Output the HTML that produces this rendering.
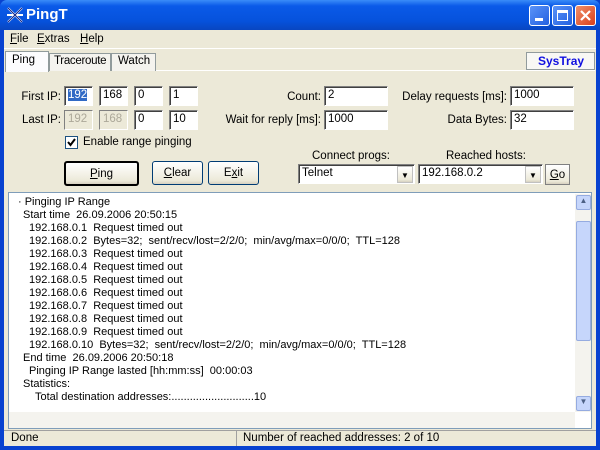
<!DOCTYPE html><html><head><style>
*{margin:0;padding:0;box-sizing:border-box}
body{width:600px;height:450px;overflow:hidden;font:11px "Liberation Sans",sans-serif;color:#000;background:#0842d0;position:relative}
.a{position:absolute}
.win{left:4px;top:30px;width:592px;height:416px;background:#ece9d8}
.tb{left:0;top:0;width:600px;height:30px;background:linear-gradient(#3a8cf8,#0a5ae8 20%,#0652dc 70%,#0846c0);border-radius:7px 7px 0 0}
.tt{left:26px;top:6px;color:#fff;font-weight:bold;font-size:15px}
.wb{top:5px;width:21px;height:21px;border:1px solid #fff;border-radius:3px;background:linear-gradient(135deg,#5a93f8,#2360e0)}
.ed{background:#fff;border:1px solid;border-color:#808080 #fff #fff #808080;box-shadow:inset 1px 1px 0 #404040;padding:2px 0 0 3px;height:20px;font-size:11.5px}
.btn{border:1px solid #003c74;border-radius:3px;background:linear-gradient(#fff,#ece9d8 85%,#d6d0c0);text-align:center;font-size:11.5px;line-height:22px}
.lbl{font-size:11.5px;white-space:nowrap}
.r{text-align:right}
.log{left:8px;top:192px;width:584px;height:237px;background:#fff;border:1px solid #7f9db9}
.ln{position:absolute;left:16px;font-size:11px;white-space:pre}
</style></head><body>
<div class="a tb"></div>
<svg class="a" style="left:6px;top:6px" width="18" height="18"><path d="M2 2L16 16M16 2L2 16M1 9h16" stroke="#fff" stroke-width="2"/><path d="M2 2L16 16M16 2L2 16" stroke="#102080" stroke-width="1"/></svg>
<div class="a tt">PingT</div>
<div class="a wb" style="left:529px"><div class="a" style="left:5px;top:12px;width:8px;height:3px;background:#fff"></div></div>
<div class="a wb" style="left:552px"><div class="a" style="left:4px;top:4px;width:11px;height:11px;border:1px solid #fff;border-top-width:3px"></div></div>
<div class="a wb" style="left:575px;background:linear-gradient(135deg,#f0906a,#d8401c)"><svg width="19" height="19"><path d="M5 5L14 14M14 5L5 14" stroke="#fff" stroke-width="2.2"/></svg></div>
<div class="a win"></div>
<div class="a lbl" style="left:10px;top:33px"><u>F</u>ile</div>
<div class="a lbl" style="left:37px;top:33px"><u>E</u>xtras</div>
<div class="a lbl" style="left:80px;top:33px"><u>H</u>elp</div>
<div class="a" style="left:4px;top:48px;width:592px;height:1px;background:#fff"></div>
<div class="a" style="left:5px;top:70px;width:590px;height:1px;background:#fff"></div>
<div class="a" style="left:5px;top:51px;width:44px;height:21px;border:1px solid #919b9c;border-bottom:none;background:#fcfcfe"></div>
<div class="a lbl" style="left:12px;top:54px">Ping</div>
<div class="a" style="left:49px;top:53px;width:62px;height:18px;border:1px solid #919b9c;border-bottom:none;background:#f4f3ee"></div>
<div class="a lbl" style="left:54px;top:55px;letter-spacing:-0.3px">Traceroute</div>
<div class="a" style="left:111px;top:53px;width:45px;height:18px;border:1px solid #919b9c;border-bottom:none;background:#f4f3ee"></div>
<div class="a lbl" style="left:118px;top:55px">Watch</div>
<div class="a" style="left:526px;top:52px;width:69px;height:18px;border:1px solid #919b9c;background:#f8f8f4"></div>
<div class="a" style="left:538px;top:54px;color:#1010e0;font-weight:bold;font-size:12px">SysTray</div>
<div class="a lbl r" style="left:0;width:61px;top:91px">First IP:</div>
<div class="a lbl r" style="left:0;width:61px;top:114px">Last IP:</div>
<div class="a ed" style="left:64px;top:86px;width:29px"><span style="background:#316ac5;color:#fff">192</span></div>
<div class="a ed" style="left:99px;top:86px;width:29px">168</div>
<div class="a ed" style="left:134px;top:86px;width:29px">0</div>
<div class="a ed" style="left:169px;top:86px;width:29px">1</div>
<div class="a ed" style="left:64px;top:110px;width:29px;background:#ece9d8;color:#aca899;box-shadow:none">192</div>
<div class="a ed" style="left:99px;top:110px;width:29px;background:#ece9d8;color:#aca899;box-shadow:none">168</div>
<div class="a ed" style="left:134px;top:110px;width:29px">0</div>
<div class="a ed" style="left:169px;top:110px;width:29px">10</div>
<div class="a" style="left:65px;top:136px;width:13px;height:13px;border:1px solid #1c5180;background:#fff"><svg width="11" height="11"><path d="M2 5L4.5 8L9 2" stroke="#000" stroke-width="2" fill="none"/></svg></div>
<div class="a lbl" style="left:83px;top:136px">Enable range pinging</div>
<div class="a btn" style="left:64px;top:161px;width:75px;height:25px;border:2px solid #000"><u>P</u>ing</div>
<div class="a btn" style="left:152px;top:161px;width:51px;height:24px"><u>C</u>lear</div>
<div class="a btn" style="left:208px;top:161px;width:51px;height:24px">E<u>x</u>it</div>
<div class="a lbl r" style="left:200px;width:121px;top:91px">Count:</div>
<div class="a lbl r" style="left:200px;width:121px;top:114px">Wait for reply [ms]:</div>
<div class="a ed" style="left:324px;top:86px;width:64px">2</div>
<div class="a ed" style="left:324px;top:110px;width:64px">1000</div>
<div class="a lbl r" style="left:390px;width:117px;top:91px">Delay requests [ms]:</div>
<div class="a lbl r" style="left:390px;width:117px;top:114px">Data Bytes:</div>
<div class="a ed" style="left:510px;top:86px;width:64px">1000</div>
<div class="a ed" style="left:510px;top:110px;width:64px">32</div>
<div class="a lbl" style="left:312px;top:150px">Connect progs:</div>
<div class="a lbl" style="left:446px;top:150px">Reached hosts:</div>
<div class="a ed" style="left:298px;top:164px;width:117px">Telnet</div>
<div class="a btn" style="left:397px;top:166px;width:16px;height:17px;line-height:17px;font-size:8px;border-radius:0;border-color:#c0c0c0">▼</div>
<div class="a ed" style="left:418px;top:164px;width:125px">192.168.0.2</div>
<div class="a btn" style="left:525px;top:166px;width:16px;height:17px;line-height:17px;font-size:8px;border-radius:0;border-color:#c0c0c0">▼</div>
<div class="a btn" style="left:545px;top:164px;width:25px;height:21px;line-height:20px;border-radius:0;border-color:#808080"><u>G</u>o</div>
<div class="a log"></div>
<div class="a" style="left:575px;top:194px;width:16px;height:218px;background:#f4f3ee"></div>
<div class="a" style="left:576px;top:195px;width:15px;height:15px;background:#c6d6fb;border:1px solid #95abe0;border-radius:2px;font-size:8px;text-align:center;color:#4d6185">▲</div>
<div class="a" style="left:576px;top:221px;width:15px;height:120px;background:#c6d6fb;border:1px solid #95abe0;border-radius:2px"></div>
<div class="a" style="left:576px;top:396px;width:15px;height:15px;background:#c6d6fb;border:1px solid #95abe0;border-radius:2px;font-size:8px;text-align:center;color:#4d6185">▼</div>
<div class="a" style="left:9px;top:412px;width:566px;height:16px;background:#f4f3ee"></div>
<div class="ln" style="top:196px;left:18px">· Pinging IP Range</div>
<div class="ln" style="top:209px;left:23px">Start time  26.09.2006 20:50:15</div>
<div class="ln" style="top:222px;left:29px">192.168.0.1  Request timed out</div>
<div class="ln" style="top:235px;left:29px">192.168.0.2  Bytes=32;  sent/recv/lost=2/2/0;  min/avg/max=0/0/0;  TTL=128</div>
<div class="ln" style="top:248px;left:29px">192.168.0.3  Request timed out</div>
<div class="ln" style="top:261px;left:29px">192.168.0.4  Request timed out</div>
<div class="ln" style="top:274px;left:29px">192.168.0.5  Request timed out</div>
<div class="ln" style="top:287px;left:29px">192.168.0.6  Request timed out</div>
<div class="ln" style="top:300px;left:29px">192.168.0.7  Request timed out</div>
<div class="ln" style="top:313px;left:29px">192.168.0.8  Request timed out</div>
<div class="ln" style="top:326px;left:29px">192.168.0.9  Request timed out</div>
<div class="ln" style="top:339px;left:29px">192.168.0.10  Bytes=32;  sent/recv/lost=2/2/0;  min/avg/max=0/0/0;  TTL=128</div>
<div class="ln" style="top:352px;left:23px">End time  26.09.2006 20:50:18</div>
<div class="ln" style="top:365px;left:29px">Pinging IP Range lasted [hh:mm:ss]  00:00:03</div>
<div class="ln" style="top:378px;left:23px">Statistics:</div>
<div class="ln" style="top:391px;left:35px">Total destination addresses:...........................10</div>
<div class="a" style="left:4px;top:430px;width:592px;height:16px;border-top:1px solid #a0a0a0"></div>
<div class="a" style="left:236px;top:431px;width:1px;height:15px;background:#a0a0a0"></div>
<div class="a lbl" style="left:11px;top:432px">Done</div>
<div class="a lbl" style="left:243px;top:432px">Number of reached addresses: 2 of 10</div>
</body></html>
